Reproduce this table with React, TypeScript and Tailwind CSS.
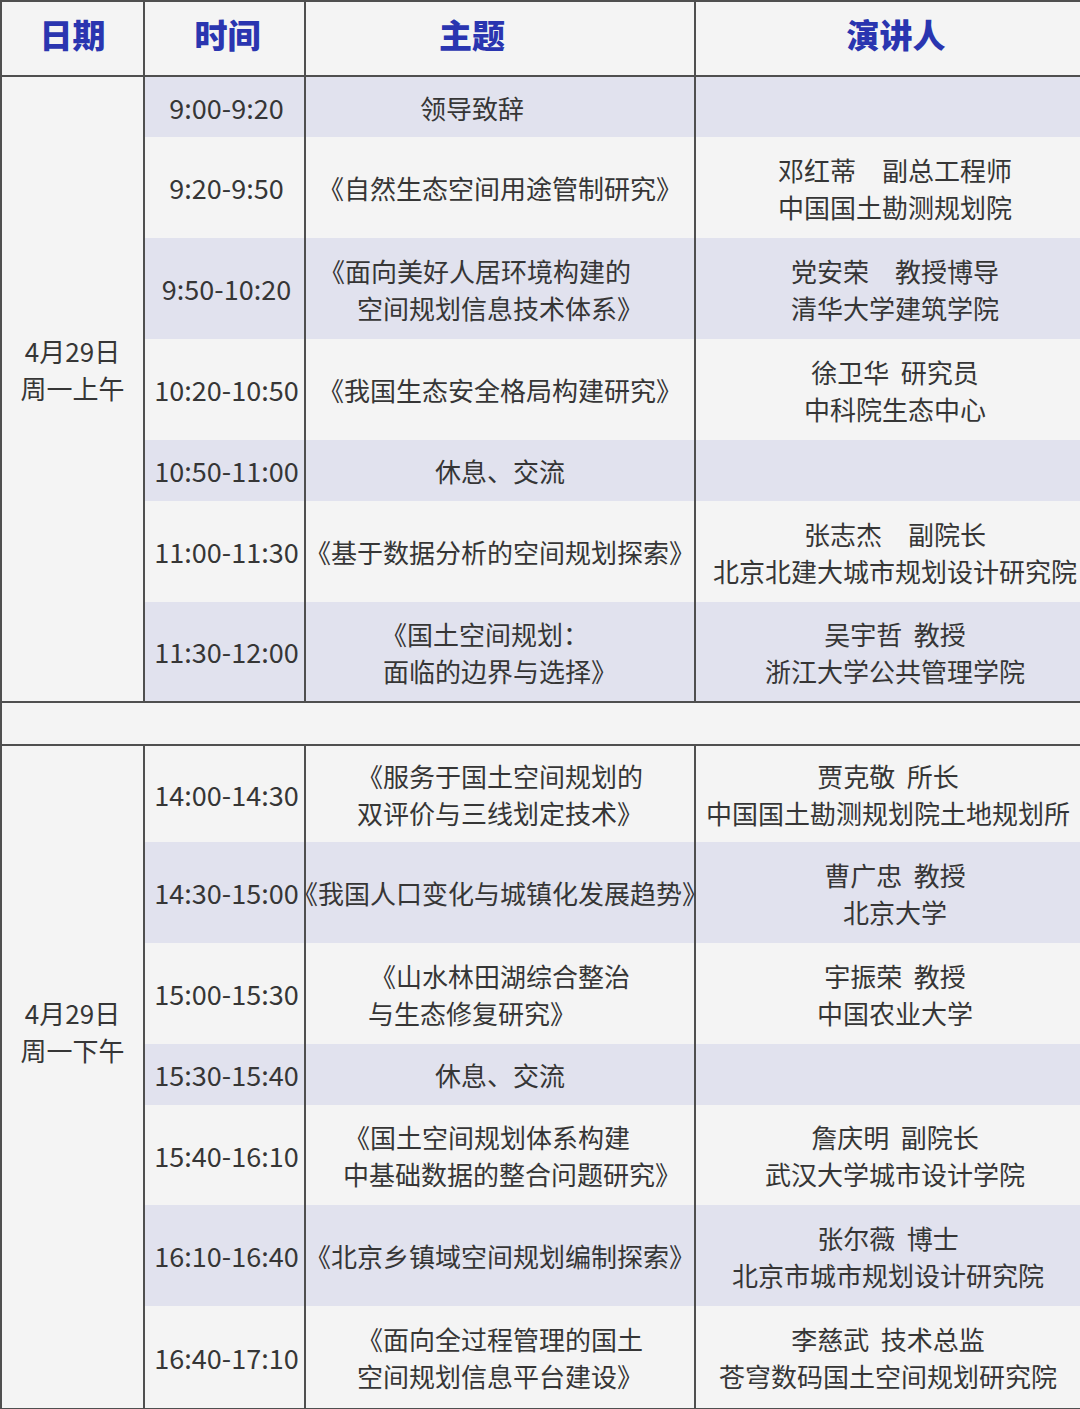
import React from "react";

// a line is plain text, or [text, extra classes] when it needs a nudge
type Line = string | [string, string];
type Row = { time: string; topic: Line[]; speaker: string[]; h: number; sp?: string };

const morning: Row[] = [
  { time: "9:00-9:20", topic: [["领导致辞", "pr-[56px]"]], speaker: [], h: 60 },
  { time: "9:20-9:50", topic: ["《自然生态空间用途管制研究》"], speaker: ["邓红蒂　副总工程师", "中国国土勘测规划院"], h: 101 },
  { time: "9:50-10:20", topic: [["《面向美好人居环境构建的", "pr-[50px]"], "空间规划信息技术体系》"], speaker: ["党安荣　教授博导", "清华大学建筑学院"], h: 101 },
  { time: "10:20-10:50", topic: ["《我国生态安全格局构建研究》"], speaker: ["徐卫华  研究员", "中科院生态中心"], h: 101 },
  { time: "10:50-11:00", topic: ["休息、交流"], speaker: [], h: 61 },
  { time: "11:00-11:30", topic: ["《基于数据分析的空间规划探索》"], speaker: ["张志杰　副院长", "北京北建大城市规划设计研究院"], h: 101 },
  { time: "11:30-12:00", topic: [["《国土空间规划：", "pr-[30px]"], "面临的边界与选择》"], speaker: ["吴宇哲  教授", "浙江大学公共管理学院"], h: 99 },
];

const afternoon: Row[] = [
  { time: "14:00-14:30", topic: ["《服务于国土空间规划的", "双评价与三线划定技术》"], speaker: ["贾克敬  所长", "中国国土勘测规划院土地规划所"], h: 96, sp: "pl-0" },
  { time: "14:30-15:00", topic: ["《我国人口变化与城镇化发展趋势》"], speaker: ["曹广忠  教授", "北京大学"], h: 101 },
  { time: "15:00-15:30", topic: ["《山水林田湖综合整治", ["与生态修复研究》", "pr-[56px]"]], speaker: ["宇振荣  教授", "中国农业大学"], h: 101 },
  { time: "15:30-15:40", topic: ["休息、交流"], speaker: [], h: 61 },
  { time: "15:40-16:10", topic: [["《国土空间规划体系构建", "pr-[26px]"], ["中基础数据的整合问题研究》", "pl-[24px]"]], speaker: ["詹庆明  副院长", "武汉大学城市设计学院"], h: 100 },
  { time: "16:10-16:40", topic: ["《北京乡镇域空间规划编制探索》"], speaker: ["张尔薇  博士", "北京市城市规划设计研究院"], h: 101, sp: "pl-0" },
  { time: "16:40-17:10", topic: ["《面向全过程管理的国土", "空间规划信息平台建设》"], speaker: ["李慈武  技术总监", "苍穹数码国土空间规划研究院"], h: 102, sp: "pl-0" },
];

function Lines({ lines }: { lines: Line[] }) {
  return (
    <>
      {lines.map((l, i) => {
        const [text, cls] = typeof l === "string" ? [l, ""] : l;
        return (
          <div key={i} className={`whitespace-pre ${cls}`}>{text}</div>
        );
      })}
    </>
  );
}

function Block({ date, rows, shift, firstShaded }: { date: string[]; rows: Row[]; shift: string; firstShaded: boolean }) {
  return (
    <div className="flex border-b-2 border-[#4f4f4f]">
      <div className={`w-[143px] shrink-0 border-r-2 border-[#4f4f4f] flex flex-col items-center justify-center ${shift}`}>
        <Lines lines={date} />
      </div>
      <div className="flex-1 flex flex-col">
        {rows.map((r, i) => (
          <div
            key={r.time}
            style={{ height: r.h }}
            className={`grid grid-cols-[161px_390px_1fr] ${(i % 2 === 0) === firstShaded ? "bg-[#e1e2ee]" : "bg-[#f4f4f4]"}`}
          >
            <div className="border-r-2 border-[#4f4f4f] flex items-center justify-center whitespace-nowrap text-[27px] pl-[4px]">{r.time}</div>
            <div className="border-r-2 border-[#4f4f4f] flex flex-col items-center justify-center text-center whitespace-nowrap">
              <Lines lines={r.topic} />
            </div>
            <div className={`flex flex-col items-center justify-center text-center whitespace-nowrap ${r.sp ?? "pl-[14px]"}`}>
              <Lines lines={r.speaker} />
            </div>
          </div>
        ))}
      </div>
    </div>
  );
}

export default function App() {
  return (
    <div
      className="w-[1080px] h-[1409px] overflow-hidden bg-[#f4f4f4] border-l-2 border-t-2 border-[#4f4f4f] text-[26px] leading-[37px] text-[#363636]"
      style={{ fontFamily: '"Noto Sans CJK SC", "Noto Sans", sans-serif' }}
    >
      <div className="grid grid-cols-[143px_161px_390px_1fr] h-[75px] border-b-2 border-[#4f4f4f] text-[33px] font-extrabold text-[#2a35b0]">
        <div className="border-r-2 border-[#4f4f4f] flex items-center justify-center pb-[8px]">日期</div>
        <div className="border-r-2 border-[#4f4f4f] flex items-center justify-center pb-[8px] pl-[6px]">时间</div>
        <div className="border-r-2 border-[#4f4f4f] flex items-center justify-center pb-[8px] pr-[56px]">主题</div>
        <div className="flex items-center justify-center pb-[8px] pl-[16px]">演讲人</div>
      </div>
      <Block date={["4月29日", "周一上午"]} rows={morning} shift="pb-[40px]" firstShaded={true} />
      <div className="h-[43px] border-b-2 border-[#4f4f4f]" />
      <Block date={["4月29日", "周一下午"]} rows={afternoon} shift="pb-[92px]" firstShaded={false} />
    </div>
  );
}
